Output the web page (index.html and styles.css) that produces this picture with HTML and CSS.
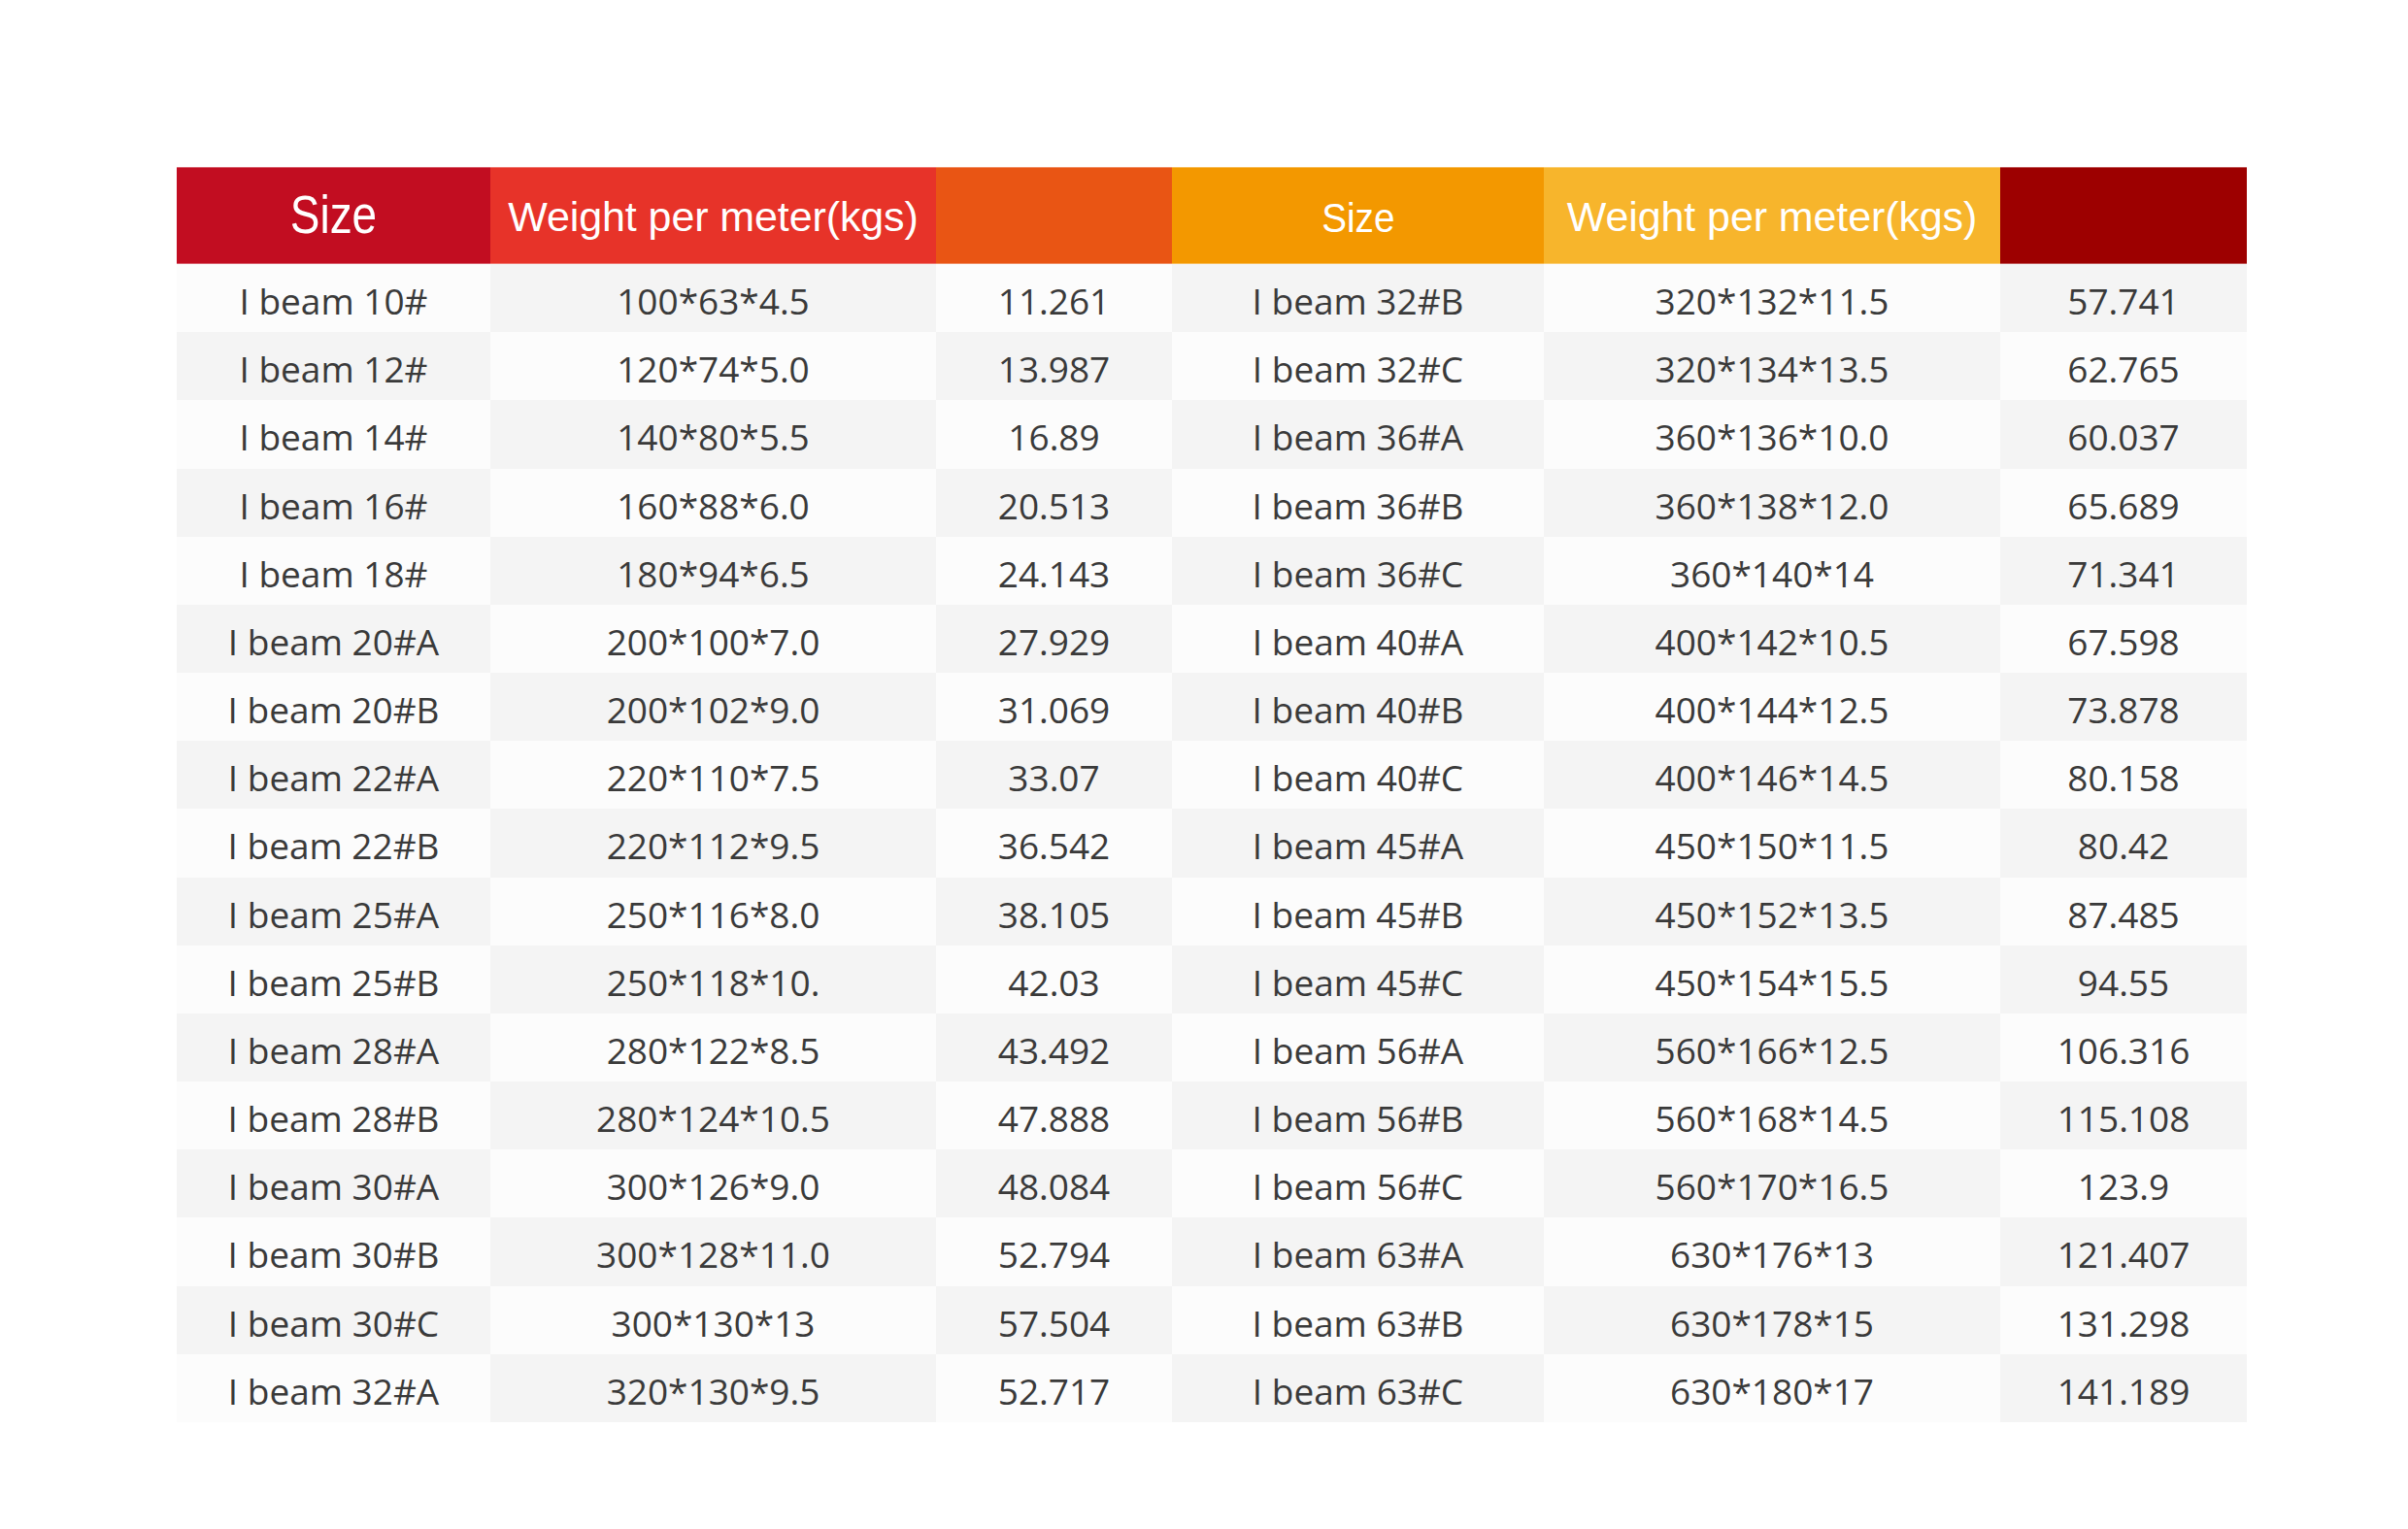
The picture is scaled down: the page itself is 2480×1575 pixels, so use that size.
FILE: index.html
```html
<!DOCTYPE html>
<html lang="en">
<head>
<meta charset="utf-8">
<title>I beam weight table</title>
<link rel="stylesheet" href="styles.css">
</head>
<body>
<div class="page">
  <div class="table">
    <div class="head">
      <div class="h h1"><span class="size-big">Size</span></div>
      <div class="h h2"><span class="wt">Weight per meter(kgs)</span></div>
      <div class="h h3"></div>
      <div class="h h4"><span class="size-small">Size</span></div>
      <div class="h h5"><span class="wt">Weight per meter(kgs)</span></div>
      <div class="h h6"></div>
    </div>
    <div class="body">
      <div class="row"><div class="c">I beam 10#</div><div class="c">100*63*4.5</div><div class="c">11.261</div><div class="c">I beam 32#B</div><div class="c">320*132*11.5</div><div class="c">57.741</div></div>
      <div class="row"><div class="c">I beam 12#</div><div class="c">120*74*5.0</div><div class="c">13.987</div><div class="c">I beam 32#C</div><div class="c">320*134*13.5</div><div class="c">62.765</div></div>
      <div class="row"><div class="c">I beam 14#</div><div class="c">140*80*5.5</div><div class="c">16.89</div><div class="c">I beam 36#A</div><div class="c">360*136*10.0</div><div class="c">60.037</div></div>
      <div class="row"><div class="c">I beam 16#</div><div class="c">160*88*6.0</div><div class="c">20.513</div><div class="c">I beam 36#B</div><div class="c">360*138*12.0</div><div class="c">65.689</div></div>
      <div class="row"><div class="c">I beam 18#</div><div class="c">180*94*6.5</div><div class="c">24.143</div><div class="c">I beam 36#C</div><div class="c">360*140*14</div><div class="c">71.341</div></div>
      <div class="row"><div class="c">I beam 20#A</div><div class="c">200*100*7.0</div><div class="c">27.929</div><div class="c">I beam 40#A</div><div class="c">400*142*10.5</div><div class="c">67.598</div></div>
      <div class="row"><div class="c">I beam 20#B</div><div class="c">200*102*9.0</div><div class="c">31.069</div><div class="c">I beam 40#B</div><div class="c">400*144*12.5</div><div class="c">73.878</div></div>
      <div class="row"><div class="c">I beam 22#A</div><div class="c">220*110*7.5</div><div class="c">33.07</div><div class="c">I beam 40#C</div><div class="c">400*146*14.5</div><div class="c">80.158</div></div>
      <div class="row"><div class="c">I beam 22#B</div><div class="c">220*112*9.5</div><div class="c">36.542</div><div class="c">I beam 45#A</div><div class="c">450*150*11.5</div><div class="c">80.42</div></div>
      <div class="row"><div class="c">I beam 25#A</div><div class="c">250*116*8.0</div><div class="c">38.105</div><div class="c">I beam 45#B</div><div class="c">450*152*13.5</div><div class="c">87.485</div></div>
      <div class="row"><div class="c">I beam 25#B</div><div class="c">250*118*10.</div><div class="c">42.03</div><div class="c">I beam 45#C</div><div class="c">450*154*15.5</div><div class="c">94.55</div></div>
      <div class="row"><div class="c">I beam 28#A</div><div class="c">280*122*8.5</div><div class="c">43.492</div><div class="c">I beam 56#A</div><div class="c">560*166*12.5</div><div class="c">106.316</div></div>
      <div class="row"><div class="c">I beam 28#B</div><div class="c">280*124*10.5</div><div class="c">47.888</div><div class="c">I beam 56#B</div><div class="c">560*168*14.5</div><div class="c">115.108</div></div>
      <div class="row"><div class="c">I beam 30#A</div><div class="c">300*126*9.0</div><div class="c">48.084</div><div class="c">I beam 56#C</div><div class="c">560*170*16.5</div><div class="c">123.9</div></div>
      <div class="row"><div class="c">I beam 30#B</div><div class="c">300*128*11.0</div><div class="c">52.794</div><div class="c">I beam 63#A</div><div class="c">630*176*13</div><div class="c">121.407</div></div>
      <div class="row"><div class="c">I beam 30#C</div><div class="c">300*130*13</div><div class="c">57.504</div><div class="c">I beam 63#B</div><div class="c">630*178*15</div><div class="c">131.298</div></div>
      <div class="row"><div class="c">I beam 32#A</div><div class="c">320*130*9.5</div><div class="c">52.717</div><div class="c">I beam 63#C</div><div class="c">630*180*17</div><div class="c">141.189</div></div>
    </div>
  </div>
</div>
</body>
</html>
```
FILE: styles.css
```css
html, body {
  margin: 0;
  padding: 0;
  background: #ffffff;
}

.page {
  width: 2480px;
  height: 1575px;
  padding: 172px 0 0 182px;
  box-sizing: border-box;
}

.table {
  width: 2132px;
  display: flex;
  flex-direction: column;
}

.head,
.row {
  display: grid;
  grid-template-columns: 323px 459px 243px 383px 470px 254px;
}

.head {
  height: 100px;
}

.h {
  display: flex;
  align-items: center;
  justify-content: center;
  color: #ffffff;
  font-family: "Liberation Sans", Arial, sans-serif;
  box-shadow: inset 0 1px 0 rgba(255, 255, 255, 0.35), inset 0 -1px 0 rgba(255, 255, 255, 0.35);
}

.h1 { background: #c20d21; }
.h2 { background: #e73329; }
.h3 { background: #e95514; }
.h4 { background: #f39800; }
.h5 { background: #f7b52c; }
.h6 { background: #9d0000; }

.size-big {
  display: inline-block;
  font-size: 56px;
  transform: scaleX(0.82);
  line-height: 1;
  margin-top: -2px;
}

.size-small {
  display: inline-block;
  font-size: 43px;
  transform: scaleX(0.9);
  line-height: 1;
  margin-top: 4px;
}

.wt {
  display: inline-block;
  font-size: 43px;
  line-height: 1;
  letter-spacing: -0.1px;
  margin-top: 3px;
}

.row {
  height: 70.18px;
}

.c {
  display: flex;
  align-items: center;
  justify-content: center;
  padding-top: 5px;
  box-sizing: border-box;
  font-family: "Open Sans", "Liberation Sans", sans-serif;
  font-size: 37px;
  color: #3a3a3a;
  background: #fcfcfc;
  white-space: nowrap;
}

.row:nth-child(odd) .c:nth-child(even),
.row:nth-child(even) .c:nth-child(odd) {
  background: #f4f4f4;
}
```
